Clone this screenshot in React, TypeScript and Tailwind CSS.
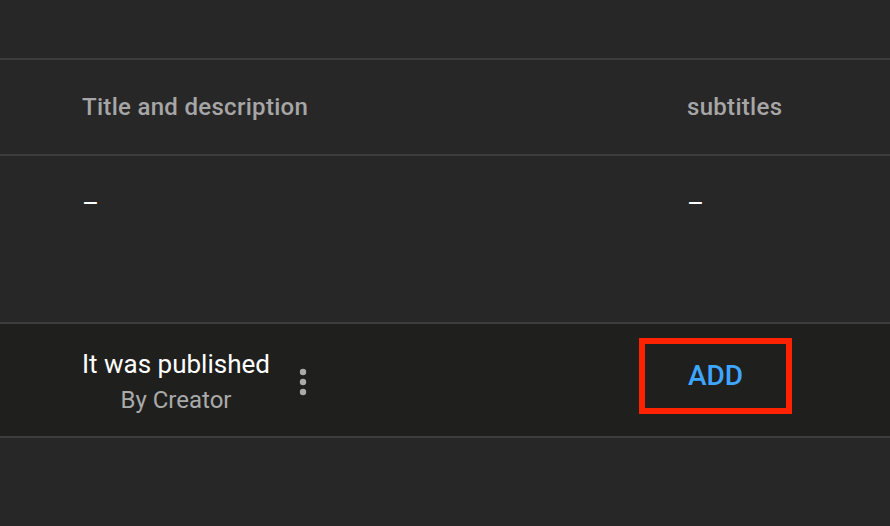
import React from "react";

function MoreVert() {
  return (
    <svg width="40" height="40" viewBox="0 0 40 40" className="block shrink-0">
      <circle cx="20" cy="10" r="3.2" fill="#aaaaaa" />
      <circle cx="20" cy="20" r="3.2" fill="#aaaaaa" />
      <circle cx="20" cy="30" r="3.2" fill="#aaaaaa" />
    </svg>
  );
}

export default function App() {
  const font = { fontFamily: "Roboto, 'Noto Sans', Arial, sans-serif" };
  return (
    <div className="w-[890px] h-[526px] bg-[#282728] overflow-hidden" style={font}>
      <div className="h-[58px]" />
      <div className="grid grid-cols-[687px_1fr] h-[98px] border-y-2 border-[#3c3c3c] items-center">
        <div className="pl-[82px] text-[24px] leading-[32px] font-medium text-[#a6a6a6] tracking-[0.3px]">
          Title and description
        </div>
        <div className="text-[24px] leading-[32px] font-medium text-[#a6a6a6] tracking-[0.3px]">subtitles</div>
      </div>
      <div className="grid grid-cols-[687px_1fr] h-[166px] pt-[31px] items-start">
        <div className="pl-[82px] text-[26px] leading-[32px] text-white">–</div>
        <div className="text-[26px] leading-[32px] text-white">–</div>
      </div>
      <div className="grid grid-cols-[687px_1fr] h-[116px] border-y-2 border-[#3c3c3c] bg-[#1f1f1e] items-center">
        <div className="pl-[82px] pt-[4px] flex items-center gap-[13px]">
          <div className="flex flex-col items-center">
            <div className="text-[26px] leading-[32px] text-white">It was published</div>
            <div className="mt-[4px] text-[24px] leading-[32px] text-[#aaaaaa]">By Creator</div>
          </div>
          <MoreVert />
        </div>
        <div className="-ml-[48px] mb-[8px]">
          <button className="w-[153px] h-[76px] border-[6px] border-[#ff2200] flex items-center justify-center text-[28px] leading-[32px] font-medium text-[#3ea6ff]">
            ADD
          </button>
        </div>
      </div>
    </div>
  );
}
